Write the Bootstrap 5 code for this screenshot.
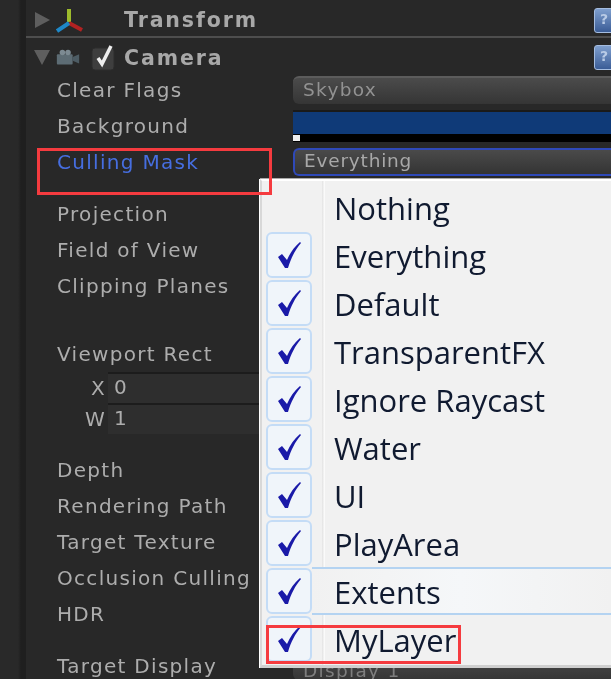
<!DOCTYPE html>
<html lang="en">
<head>
<meta charset="utf-8">
<title>Camera inspector</title>
<link rel="stylesheet" href="https://cdn.jsdelivr.net/npm/bootstrap@5.3.0/dist/css/bootstrap.min.css">
<style>
html,body{height:679px;width:611px;overflow:hidden;background:#282828}
.stage{position:relative;width:611px;height:679px;overflow:hidden;background:#282828}
.side-strip{width:26px;height:679px;flex:none;background:linear-gradient(90deg,#292929 0,#292929 18px,#1f1f1f 21px,#1f1f1f 26px)}
.inspector{flex:1 1 auto;min-width:0;font-family:"DejaVu Sans",sans-serif;font-size:20px;line-height:24px;color:#adadad;letter-spacing:1.3px;filter:blur(.45px)}
.head-first{height:36px;padding:4px 0 0 9px}
.head-second{height:39px;margin-top:0;padding:0 0 0 8px}
.head-rule{height:2px;background:#4e4e4e}
.head-title{font-weight:700;letter-spacing:1.9px;font-size:20.5px;color:#a8a8a8}
.gizmo{margin-left:6px}
.title-t{margin-left:38px}
.cam-ico{margin-left:5px}
.cam-box{margin-left:10px}
.title-c{margin-left:7px}
.tri-r{width:0;height:0;border-style:solid;border-width:8px 0 8px 15px;border-color:transparent transparent transparent #5e5e5e}
.tri-d{width:0;height:0;border-style:solid;border-width:15px 8px 0 8px;border-color:#5e5e5e transparent transparent transparent}
.help-ico{width:20px;height:25px;margin-left:auto;margin-right:-3px;border-radius:3px;background:linear-gradient(#7f9fce,#3a5c96);border:1px solid #a5bde0;color:#b9cbe6;font-size:14px;line-height:21px;text-align:center;letter-spacing:0;font-weight:700}
.prop{height:36px;padding-left:31px;display:flex;align-items:center;white-space:nowrap}
.prop-first{margin-top:-5px}
.prop-blue{color:#466ee0}
.gap-a{margin-top:16px}
.gap-b{margin-top:32px}
.gap-c{margin-top:18px}
.pname{width:236px;flex:none}
.drop{height:28px;flex:1 1 auto;border-radius:6px 0 0 6px;background:linear-gradient(#4b4b4b,#353535);border-top:2px solid #5c5c5c;padding-left:10px;font-size:18.5px;line-height:24px;color:#929292}
.drop-sel{background:linear-gradient(#4a4a4a,#343434);border:2px solid #2f49b8;border-right:0;padding-left:9px;color:#a8a8a8;line-height:22px;letter-spacing:.8px}
.drop-low{color:#7e7e7e;line-height:34px}
.swatch{position:relative;flex:1 1 auto;height:32px;background:#0f3a78;border-bottom:8px solid #000;border-top:2px solid #1a1a1a}
.swatch-dot{position:absolute;left:0;bottom:-7px;width:7px;height:6px;background:#eee}
.vec{display:flex;align-items:center;height:31px;padding-left:56px}
.vec-l{width:24px;text-align:right;flex:none;margin-right:2px}
.vec-v{width:152px;height:31px;background:#2e2e2e;border-top:2px solid #1c1c1c;padding-left:6px;line-height:27px}
.menu-pop{position:absolute;left:260px;top:179px;width:351px;height:489px;padding-top:2px;background:#f1f1f1;border-left:2px solid #d8d8d8;border-top:2px solid #fff;border-bottom:3px solid #cfcfcf;font-family:"Open Sans","Noto Sans",sans-serif;font-size:31px;color:#101a30;box-shadow:-1px 0 0 #fff,0 -1px 0 #aaa}
.menu-gut{position:absolute;left:60px;top:0;bottom:0;width:3px;background:linear-gradient(90deg,#e2e2e2,#fff)}
.menu-it{height:48px;display:flex;align-items:center;padding-left:4px;position:relative}
.menu-hot::before{content:"";position:absolute;left:50px;right:0;top:0;bottom:0;border-top:2px solid #b4d3f1;border-bottom:2px solid #b4d3f1;background:linear-gradient(90deg,#f1f1f1,#f5f7f9 50%,#f1f1f1)}
.chk{width:46px;height:46px;flex:none;border:2px solid #c4dcf6;border-radius:6px;background:#f0f5fa;display:flex;align-items:center;justify-content:center;position:relative}
.chk-none{border-color:transparent;background:none}
.it-lbl{margin-left:22px;padding-top:2px;line-height:46px;position:relative;filter:blur(.3px)}
.anno{position:absolute;border:3px solid #f53b3f;pointer-events:none}
.anno-a{left:37px;top:148px;width:235px;height:47px}
.anno-b{left:266px;top:625px;width:195px;height:39px}
</style>
</head>
<body>
<svg width="0" height="0" class="position-absolute"><defs><symbol id="tick" viewBox="0 0 26 30"><path d="M2 17l4-3 5 6C14 13 18 7 24 2l1 1C19 10 15 18 12 28h-3z" fill="#1a1aa8"/></symbol></defs></svg>
<div class="stage d-flex">
  <div class="side-strip"></div>
  <div class="inspector">
    <div class="head-first d-flex align-items-center">
      <div class="tri-r"></div>
      <svg width="30" height="30" viewBox="0 0 30 30" class="gizmo"><path d="M13 17V4" stroke="#9dbb2c" stroke-width="4"/><path d="M13 18L26 25" stroke="#b22222" stroke-width="4"/><path d="M13 18L1 26" stroke="#1e88c8" stroke-width="4"/></svg>
      <span class="head-title title-t">Transform</span>
      <span class="help-ico">?</span>
    </div>
    <div class="head-rule"></div>
    <div class="head-second d-flex align-items-center">
      <div class="tri-d"></div>
      <svg width="26" height="24" viewBox="0 0 28 24" class="cam-ico"><rect x="2" y="8" width="17" height="11" rx="1" fill="#5d6c74"/><circle cx="8" cy="6" r="3" fill="#7c8a92"/><circle cx="14" cy="6" r="3" fill="#7c8a92"/><path d="M19 11l7-3v10l-7-3z" fill="#4d5c64"/></svg>
      <svg width="26" height="26" viewBox="0 0 26 26" class="cam-box"><rect x="1" y="3" width="22" height="22" rx="3" fill="#3e3e3e" stroke="#2c2c2c"/><path d="M7 13l4 6 9-18" fill="none" stroke="#eee" stroke-width="3.5"/></svg>
      <span class="head-title title-c">Camera</span>
      <span class="help-ico">?</span>
    </div>
    <div class="prop prop-first"><span class="pname">Clear Flags</span><div class="drop">Skybox</div></div>
    <div class="prop"><span class="pname">Background</span><div class="swatch"><span class="swatch-dot"></span></div></div>
    <div class="prop prop-blue"><span class="pname">Culling Mask</span><div class="drop drop-sel">Everything</div></div>
    <div class="prop gap-a"><span class="pname">Projection</span></div>
    <div class="prop"><span class="pname">Field of View</span></div>
    <div class="prop"><span class="pname">Clipping Planes</span></div>
    <div class="prop gap-b"><span class="pname">Viewport Rect</span></div>
    <div class="vec"><span class="vec-l">X</span><div class="vec-v">0</div></div>
    <div class="vec"><span class="vec-l">W</span><div class="vec-v">1</div></div>
    <div class="prop gap-c"><span class="pname">Depth</span></div>
    <div class="prop"><span class="pname">Rendering Path</span></div>
    <div class="prop"><span class="pname">Target Texture</span></div>
    <div class="prop"><span class="pname">Occlusion Culling</span></div>
    <div class="prop"><span class="pname">HDR</span></div>
    <div class="prop gap-a"><span class="pname">Target Display</span><div class="drop drop-low">Display 1</div></div>
  </div>

  <div class="menu-pop">
    <div class="menu-gut"></div>
    <div class="menu-it"><span class="chk chk-none"></span><span class="it-lbl">Nothing</span></div>
    <div class="menu-it"><span class="chk"><svg width="26" height="30"><use href="#tick"/></svg></span><span class="it-lbl">Everything</span></div>
    <div class="menu-it"><span class="chk"><svg width="26" height="30"><use href="#tick"/></svg></span><span class="it-lbl">Default</span></div>
    <div class="menu-it"><span class="chk"><svg width="26" height="30"><use href="#tick"/></svg></span><span class="it-lbl">TransparentFX</span></div>
    <div class="menu-it"><span class="chk"><svg width="26" height="30"><use href="#tick"/></svg></span><span class="it-lbl">Ignore Raycast</span></div>
    <div class="menu-it"><span class="chk"><svg width="26" height="30"><use href="#tick"/></svg></span><span class="it-lbl">Water</span></div>
    <div class="menu-it"><span class="chk"><svg width="26" height="30"><use href="#tick"/></svg></span><span class="it-lbl">UI</span></div>
    <div class="menu-it"><span class="chk"><svg width="26" height="30"><use href="#tick"/></svg></span><span class="it-lbl">PlayArea</span></div>
    <div class="menu-it menu-hot"><span class="chk"><svg width="26" height="30"><use href="#tick"/></svg></span><span class="it-lbl">Extents</span></div>
    <div class="menu-it"><span class="chk"><svg width="26" height="30"><use href="#tick"/></svg></span><span class="it-lbl">MyLayer</span></div>
  </div>

  <div class="anno anno-a"></div>
  <div class="anno anno-b"></div>
</div>
<script src="https://cdn.jsdelivr.net/npm/bootstrap@5.3.0/dist/js/bootstrap.bundle.min.js"></script>
</body>
</html>
